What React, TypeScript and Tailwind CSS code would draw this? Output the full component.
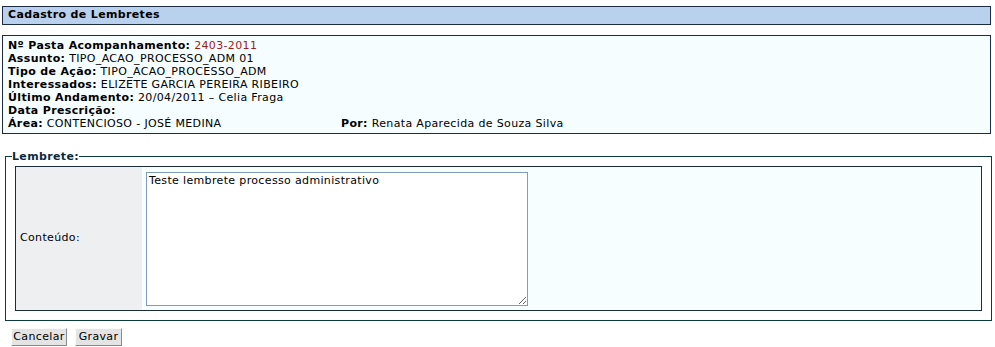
import React from "react";

const font = { fontFamily: '"DejaVu Sans", Verdana, sans-serif', letterSpacing: "0.35px" };

function Row({ label, value, red }: { label: string; value?: string; red?: boolean }) {
  return (
    <div className="h-[13px] leading-[13px] whitespace-nowrap">
      <b>{label}</b> <span className={red ? "text-[#a01a1a]" : ""}>{value}</span>
    </div>
  );
}

export default function App() {
  return (
    <div className="bg-white w-[995px] h-[347px] text-[11px] text-black pt-[6px]" style={font}>
      <div className="ml-[2px] w-[989px] h-[19px] border border-[#1d2b45] bg-[#b9d1ec] pl-[5px] leading-[16px] font-bold">
        Cadastro de Lembretes
      </div>
      <div className="ml-[2px] mt-[10px] w-[989px] h-[99px] border border-[#1d2b45] bg-[#f6fdff] pl-[5px] pt-[3px]">
        <Row label="Nº Pasta Acompanhamento:" value="2403-2011" red />
        <Row label="Assunto:" value="TIPO_ACAO_PROCESSO_ADM 01" />
        <Row label="Tipo de Ação:" value="TIPO_ACAO_PROCESSO_ADM" />
        <Row label="Interessados:" value="ELIZETE GARCIA PEREIRA RIBEIRO" />
        <Row label="Último Andamento:" value="20/04/2011 – Celia Fraga" />
        <Row label="Data Prescrição:" />
        <div className="flex h-[13px] leading-[13px] whitespace-nowrap">
          <div className="w-[333px]">
            <b>Área:</b> CONTENCIOSO - JOSÉ MEDINA
          </div>
          <div>
            <b>Por:</b> Renata Aparecida de Souza Silva
          </div>
        </div>
      </div>
      <fieldset className="ml-[5px] mt-[16px] w-[986px] h-[171px] border border-[#0d3a3c] px-[9px] pb-[8px] pt-[3px]">
        <legend className="-ml-[3px] font-bold text-[#0d2a3c] text-[11px] leading-[13px]">Lembrete:</legend>
        <div className="w-[967px] h-[145px] border border-[#1b2b40] bg-[#f7feff] flex">
          <div className="w-[126px] bg-[#eeeff1] flex items-center pl-[4px] mr-[4px]">Conteúdo:</div>
          <div className="pt-[5px]">
            <textarea
              defaultValue="Teste lembrete processo administrativo"
              className="block w-[382px] h-[134px] border border-[#7f9db9] bg-white px-[2px] py-[1px] text-[11px] leading-[13px] resize-y outline-none"
              style={font}
            />
          </div>
        </div>
      </fieldset>
      <div className="flex gap-[8px] ml-[11px] mt-[7px]">
        <button
          className="h-[18px] w-[56px] bg-[#e4e4e4] border border-t-[#fbfbfb] border-l-[#fbfbfb] border-r-[#8a8a8a] border-b-[#8a8a8a] text-[11px] leading-[14px]"
          style={font}
        >
          Cancelar
        </button>
        <button
          className="h-[18px] w-[47px] bg-[#e4e4e4] border border-t-[#fbfbfb] border-l-[#fbfbfb] border-r-[#8a8a8a] border-b-[#8a8a8a] text-[11px] leading-[14px]"
          style={font}
        >
          Gravar
        </button>
      </div>
    </div>
  );
}
